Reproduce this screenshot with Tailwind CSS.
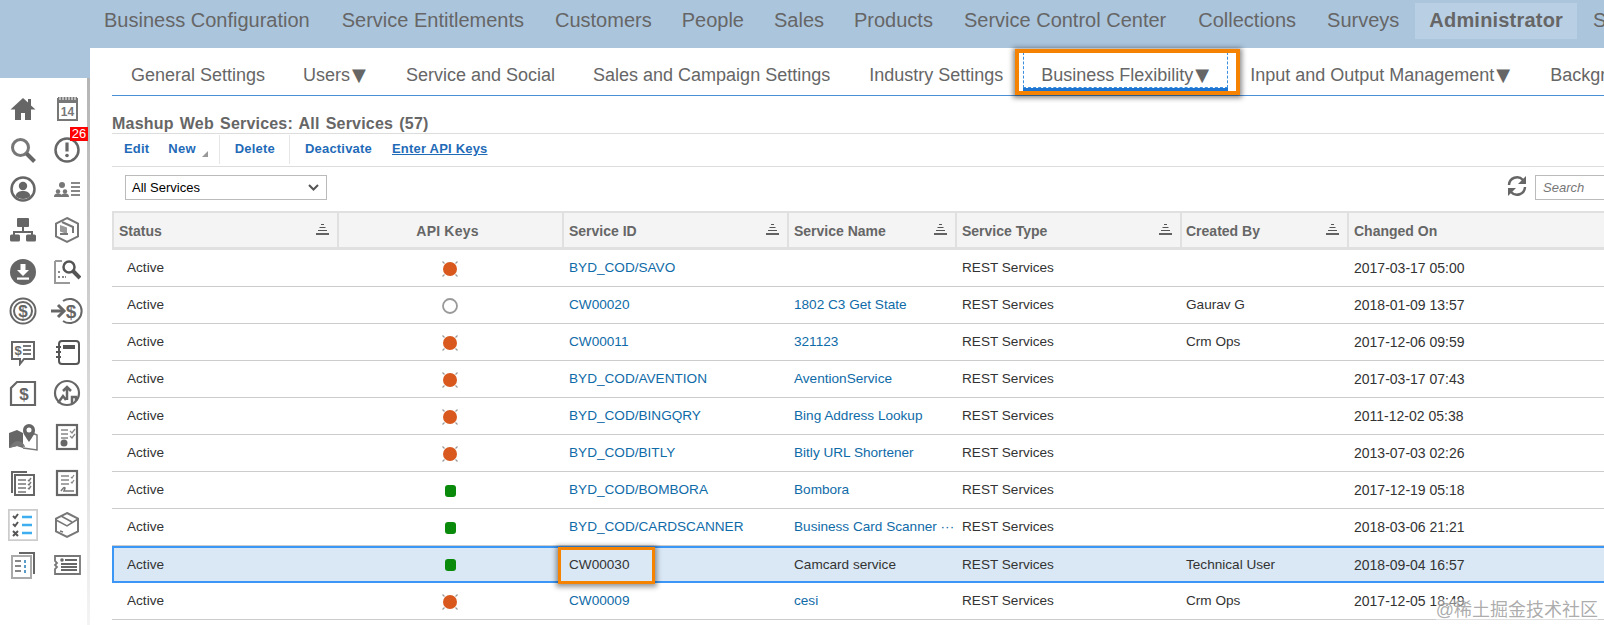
<!DOCTYPE html>
<html lang="en">
<head>
    <meta charset="UTF-8">
    <script src="https://cdn.jsdelivr.net/npm/@tailwindcss/browser@4"></script>
    <title>Mashup Web Services</title>
</head>
<body class="bg-[#abc5dd] font-['Liberation_Sans',Arial,sans-serif] overflow-hidden">
<div class="relative w-[1604px] h-[625px] overflow-hidden">
    <!-- top nav -->
    <nav class="h-[48px] flex pl-[104px] gap-[30px] text-[20px] text-[#666] whitespace-nowrap pt-[5px]">
        <span>Business Configuration</span>
        <span class="ml-[2px]">Service Entitlements</span>
        <span class="ml-[1px]">Customers</span>
        <span>People</span>
        <span>Sales</span>
        <span>Products</span>
        <span class="ml-[1px]">Service Control Center</span>
        <span class="ml-[2px]">Collections</span>
        <span class="ml-[1px]">Surveys</span>
        <span class="relative font-bold tracking-[0.2px]"><span class="absolute -left-[14px] -right-[14px] -top-[2px] h-[36px] bg-[#b9cfe4]"></span><span class="relative">Administrator</span></span>
        <span>Services</span>
    </nav>

    <div class="flex h-[577px]">
        <!-- sidebar -->
        <aside class="relative w-[90px] mt-[30px] h-[547px] bg-white shrink-0 pt-[10px]">
            <span class="absolute right-0 top-0 w-[3px] h-full bg-linear-to-b from-[#b5b5b5] to-[#f4f4f4]"></span>
            <div class="relative w-[88px] grid grid-cols-[45px_43px] grid-rows-[41px_41px_38px_44px_39px_40px_41px_41px_48px_44px_40px_40px] justify-items-center items-center">
                <svg width="28" height="28" viewBox="0 0 28 28" fill="#666"><path d="M14 3 1.500 14.500H6V25h6v-7h4v7h6V14.500h4.500L22 10.500V4h-3v3.500z"/></svg>
                <svg width="28" height="28" viewBox="0 0 28 28"><rect x="5" y="4" width="19" height="21" fill="#fff" stroke="#777" stroke-width="2"/><rect x="5" y="2" width="19" height="6" fill="#777"/><path d="M7 2v3M10 2v3M13 2v3M16 2v3M19 2v3M22 2v3" stroke="#fff" stroke-width="1"/><text x="14.500" y="21" text-anchor="middle" font-size="12" font-weight="700" fill="#777">14</text></svg>
                <svg width="28" height="28" viewBox="0 0 28 28" fill="none"><circle cx="11.500" cy="11.500" r="8" stroke="#777" stroke-width="3"/><path d="m17.500 17.500 8 8" stroke="#666" stroke-width="4"/></svg>
                <svg width="28" height="28" viewBox="0 0 28 28" fill="none"><circle cx="14" cy="14" r="11.500" stroke="#666" stroke-width="2.500"/><path d="M14 6.500v9" stroke="#666" stroke-width="3.200"/><circle cx="14" cy="19.500" r="1.800" fill="#666"/></svg>
                <svg width="28" height="28" viewBox="0 0 28 28" fill="none"><circle cx="14" cy="14" r="11.500" stroke="#666" stroke-width="2.500"/><circle cx="14" cy="11" r="4.200" fill="#666"/><path d="M6.500 21c1-4 4-5 7.500-5s6.500 1 7.500 5c-2 2-4.500 3-7.500 3s-5.500-1-7.500-3z" fill="#666"/></svg>
                <svg width="28" height="28" viewBox="0 0 28 28" fill="#777"><circle cx="9" cy="10" r="3"/><circle cx="5" cy="16.500" r="2.200"/><circle cx="12" cy="16.500" r="2.200"/><path d="M1 22c0-3 2-3.500 4-3.500s4 .5 4 3.500zM8 22c0-3 2-3.500 4-3.500s4 .5 4 3.500z"/><path d="M18 8h9M18 12h9M18 16h9M18 20h9" stroke="#888" stroke-width="2"/></svg>
                <svg width="28" height="28" viewBox="0 0 28 28" fill="#666"><rect x="8" y="2" width="12" height="9" rx="1"/><path d="M14 11v5M5 19v-3h18v3" stroke="#666" stroke-width="2" fill="none"/><rect x="1" y="18.500" width="10" height="7" rx="1.500"/><rect x="17" y="18.500" width="10" height="7" rx="1.500"/></svg>
                <svg width="28" height="28" viewBox="0 0 28 28" fill="none"><path d="M14 2 25 7.500v13L14 26 3 20.500v-13z" stroke="#777" stroke-width="2"/><path d="M7 9l7 2.500V18l-7-2.500z" fill="#999"/><path d="M7 18h8M9 6l11 5v6" stroke="#777" stroke-width="2"/></svg>
                <svg width="28" height="28" viewBox="0 0 28 28"><circle cx="14" cy="14" r="13" fill="#666"/><path d="M11.500 6h5v6h3.500l-6 6-6-6h3.500z" fill="#fff"/><rect x="8" y="19.500" width="12" height="2.200" fill="#fff"/></svg>
                <svg width="28" height="28" viewBox="0 0 28 28" fill="none"><path d="M2 3h7M2 3v22h15M22 15v-2" stroke="#999" stroke-width="2"/><path d="M5 14h2M5 19h2M9 19h4" stroke="#888" stroke-width="2" stroke-dasharray="2 1"/><circle cx="16" cy="9" r="5.500" stroke="#555" stroke-width="2.500"/><path d="m20 13 7 7" stroke="#555" stroke-width="4"/></svg>
                <svg width="28" height="28" viewBox="0 0 28 28" fill="none"><circle cx="14" cy="14" r="12.500" stroke="#666" stroke-width="2"/><circle cx="14" cy="14" r="9" stroke="#666" stroke-width="2"/><text x="14" y="20" text-anchor="middle" font-size="17" font-weight="700" fill="#666" stroke="none">$</text></svg>
                <svg width="34" height="28" viewBox="0 0 34 28" fill="none"><path d="M13 4a12 12 0 1 1 0 20" stroke="#666" stroke-width="2"/><text x="21" y="21" text-anchor="middle" font-size="19" font-weight="700" fill="#666">$</text><path d="M1 14h11" stroke="#666" stroke-width="3"/><path d="m8 8 6 6-6 6" stroke="#666" stroke-width="3"/></svg>
                <svg width="28" height="28" viewBox="0 0 28 28" fill="none"><path d="M3 4h22v17H15l-4 5v-5H3z" stroke="#666" stroke-width="2"/><text x="9" y="17" text-anchor="middle" font-size="13" font-weight="700" fill="#666">$</text><path d="M14 8h8M14 12h8M14 16h8" stroke="#777" stroke-width="2"/></svg>
                <svg width="28" height="28" viewBox="0 0 28 28" fill="none"><rect x="6" y="3" width="20" height="23" rx="3" stroke="#555" stroke-width="2"/><rect x="10" y="7" width="12" height="4" fill="#555"/><path d="M3 9h5M3 14h5M3 19h5" stroke="#555" stroke-width="2"/></svg>
                <svg width="28" height="28" viewBox="0 0 28 28" fill="none"><path d="M8 3h18v23H2V9z" stroke="#666" stroke-width="2.200"/><text x="15" y="21" text-anchor="middle" font-size="17" font-weight="700" fill="#666">$</text></svg>
                <svg width="28" height="28" viewBox="0 0 28 28" fill="none"><circle cx="14" cy="14" r="12" stroke="#666" stroke-width="2.200"/><path d="M5 24l5-7 3 4M14 21V9M10 12l4-4 4 4M19 25v-7h4v4" stroke="#666" stroke-width="2.500"/></svg>
                <svg width="30" height="30" viewBox="0 0 30 30" fill="none"><path d="M1 11l8-3 6 3v15l-6-2-8 2z" fill="#666"/><path d="M15 26l14 2V13l-5-2" fill="#fff" stroke="#777" stroke-width="1.500"/><path d="M4 22c5-6 12-2 13 3l-8-1-8 2z" fill="#777"/><path d="M21 20c-4-6-6-8-6-12a6 6 0 0 1 12 0c0 4-2 6-6 12z" fill="#666"/><circle cx="21" cy="8" r="2.500" fill="#fff"/></svg>
                <svg width="28" height="28" viewBox="0 0 28 28" fill="none"><rect x="4" y="2" width="20" height="24" stroke="#666" stroke-width="2.200"/><path d="M8 7h7M8 11h7M8 15h7M17 8l2 2 3-4M17 13l2 2 3-4" stroke="#888" stroke-width="1.300"/><circle cx="11" cy="20" r="3.500" fill="#666"/></svg>
                <svg width="28" height="28" viewBox="0 0 28 28" fill="none"><path d="M3 24V3h15" stroke="#666" stroke-width="2"/><rect x="6" y="6" width="19" height="20" fill="#fff" stroke="#666" stroke-width="2"/><path d="M9 11h8M9 15h8M9 19h8M9 23h8M19 11l1 1 2-3M19 15l1 1 2-3M19 19l1 1 2-3" stroke="#777" stroke-width="1.400"/></svg>
                <svg width="28" height="28" viewBox="0 0 28 28" fill="none"><rect x="4" y="2" width="20" height="24" stroke="#666" stroke-width="2.200"/><path d="M8 7h8M8 11h8M8 15h8M18 8l1 1 2-3M18 13l1 1 2-3" stroke="#888" stroke-width="1.300"/><path d="M8 22c2-3 3-4 4-3l-1 3h10" stroke="#777" stroke-width="1.600"/></svg>
                <svg width="30" height="32" viewBox="0 0 30 32" fill="none"><rect x="0.500" y="0.500" width="29" height="31" fill="#fff" stroke="#ccc" stroke-width="2.500"/><path d="M5 7l2 2 3-4M5 15l2 2 3-4" stroke="#555" stroke-width="2"/><path d="M5 22l5 5M10 22l-5 5" stroke="#555" stroke-width="2"/><path d="M14 8h10M14 16h10M14 24h10" stroke="#3daef0" stroke-width="2.500"/></svg>
                <svg width="28" height="28" viewBox="0 0 28 28" fill="none"><path d="M14 2 25 7.500v13L14 26 3 20.500v-13z" stroke="#777" stroke-width="2"/><path d="M3 9l11 6 11-7M8 5l11 6M7 20l3 1" stroke="#777" stroke-width="1.500"/></svg>
                <svg width="28" height="28" viewBox="0 0 28 28" fill="none"><path d="M10 2h15v21" stroke="#666" stroke-width="2"/><rect x="3" y="5" width="19" height="22" fill="#fff" stroke="#aaa" stroke-width="2"/><path d="M6 10h6M6 15h6M6 20h6" stroke="#888" stroke-width="2"/><path d="M16 9v3M16 14v3M16 19v3" stroke="#5a9bc8" stroke-width="2"/></svg>
                <svg width="28" height="28" viewBox="0 0 28 28" fill="none"><path d="M2 5h25v18H2v-5l2-2-2-2 2-2-2-2z" stroke="#777" stroke-width="1.800"/><circle cx="9" cy="9" r="1.800" fill="#666"/><path d="M12 9h12M8 13h16M8 16h16M8 19h16" stroke="#666" stroke-width="1.800"/></svg>
                <span class="absolute left-[70px] top-[39px] w-[18px] h-[14px] bg-[#f00] text-white text-[13px] leading-[14px] text-center">26</span>
            </div>
        </aside>

        <!-- main -->
        <main class="flex-1 min-w-0 bg-white pl-[22px]">
            <div class="h-[48px] border-b border-[#4a90d9] pl-[19px] pt-[14px] flex gap-[38px] items-start text-[18px] leading-[27px] text-[#666] whitespace-nowrap [&_b]:font-normal [&_b]:font-['DejaVu_Sans'] [&_b]:leading-none [&_b]:px-[2px]">
                <span>General Settings</span>
                <span>Users<b>▼</b></span>
                <span>Service and Social</span>
                <span>Sales and Campaign Settings</span>
                <span class="ml-[1px]">Industry Settings</span>
                <span class="relative">
                    Business Flexibility<b>▼</b>
                    <span class="absolute -left-[18px] -right-[17px] -top-[10px] h-[36px] border border-dashed border-[#3a8ee0]"></span>
                    <span class="absolute -left-[18px] -right-[17px] top-[26px] h-[3px] bg-[#1d74d0]"></span>
                    <span class="absolute -left-[26px] -right-[29px] -top-[13px] h-[46px] border-[4px] border-[#f58200] shadow-[0_1px_5px_2px_rgba(0,0,0,0.45)]"></span>
                </span>
                <span class="ml-[1px]">Input and Output Management<b>▼</b></span>
                <span>Background</span>
            </div>

            <h1 class="h-[38px] border-b border-[#ddd] pt-[18px] text-[16px] leading-[20px] font-bold text-[#666] tracking-[0.2px] [word-spacing:1.500px]">Mashup Web Services: All Services (57)</h1>

            <div class="h-[33px] border-b border-[#ddd] flex items-center pb-[2px] text-[13px] tracking-[0.2px] font-bold text-[#1f6bb8] whitespace-nowrap">
                <span class="ml-[12px]">Edit</span>
                <span class="ml-[19px]">New</span>
                <span class="ml-[6px] mt-[10px] border-l-[6px] border-b-[6px] border-l-transparent border-b-[#999]"></span>
                <span class="ml-[11px] h-[29px] w-[1px] bg-[#e6e6e6]"></span>
                <span class="ml-[15px]">Delete</span>
                <span class="ml-[14px] h-[29px] w-[1px] bg-[#e6e6e6]"></span>
                <span class="ml-[15px]">Deactivate</span>
                <span class="ml-[20px] underline">Enter API Keys</span>
            </div>

            <div class="h-[44px] flex items-start pt-[8px] pr-0 relative">
                <div class="ml-[13px] w-[202px] h-[25px] border border-[#bbb] flex items-center justify-between pl-[6px] pr-[7px] text-[13px] text-black">
                    All Services
                    <svg width="11" height="7" viewBox="0 0 11 7" fill="none"><path d="m1 1 4.500 4.500L10 1" stroke="#555" stroke-width="2"/></svg>
                </div>
                <svg class="ml-auto mr-[7px] mt-[-1px]" width="22" height="24" viewBox="0 0 22 24" fill="none"><path d="M3 11a8 8 0 0 1 14-5l2 2" stroke="#666" stroke-width="2.500"/><path d="M20 2v8h-8z" fill="#666"/><path d="M19 13a8 8 0 0 1-14 5l-2-2" stroke="#666" stroke-width="2.500"/><path d="M2 22v-8h8z" fill="#666"/></svg>
                <div class="w-[69px] h-[25px] border border-[#bbb] border-r-0 pl-[7px] text-[13px] leading-[23px] italic text-[#777]">Search</div>
            </div>

            <table class="table-fixed w-[1492px] border-separate border-spacing-0 text-[13.6px] text-[#333] whitespace-nowrap">
                <colgroup>
                    <col class="w-[227px]"><col class="w-[225px]"><col class="w-[225px]"><col class="w-[168px]"><col class="w-[225px]"><col class="w-[167px]"><col>
                </colgroup>
                <thead>
                    <tr class="h-[39px] bg-[#f4f4f4] text-[14px] font-bold text-[#666] text-left [&>th]:pt-[2px]">
                        <th class="relative border-y-2 border-b-[3px] border-l-2 border-r-2 border-[#e0e0e0] pl-[5px]">Status<svg class="absolute right-[8px] top-[11px]" width="13" height="11" viewBox="0 0 13 11"><path d="M5 .500h3M3.500 3.500h6M2 6.500h9" stroke="#555"/><path d="M0 10h13" stroke="#000" stroke-width="1.200"/></svg></th>
                        <th class="border-y-2 border-b-[3px] border-r-2 border-[#e0e0e0] text-center pr-[6px] tracking-[0.2px]">API Keys</th>
                        <th class="relative border-y-2 border-b-[3px] border-r-2 border-[#e0e0e0] pl-[5px]">Service ID<svg class="absolute right-[8px] top-[11px]" width="13" height="11" viewBox="0 0 13 11"><path d="M5 .500h3M3.500 3.500h6M2 6.500h9" stroke="#555"/><path d="M0 10h13" stroke="#000" stroke-width="1.200"/></svg></th>
                        <th class="relative border-y-2 border-b-[3px] border-r-2 border-[#e0e0e0] pl-[5px]">Service Name<svg class="absolute right-[8px] top-[11px]" width="13" height="11" viewBox="0 0 13 11"><path d="M5 .500h3M3.500 3.500h6M2 6.500h9" stroke="#555"/><path d="M0 10h13" stroke="#000" stroke-width="1.200"/></svg></th>
                        <th class="relative border-y-2 border-b-[3px] border-r-2 border-[#e0e0e0] pl-[5px]">Service Type<svg class="absolute right-[8px] top-[11px]" width="13" height="11" viewBox="0 0 13 11"><path d="M5 .500h3M3.500 3.500h6M2 6.500h9" stroke="#555"/><path d="M0 10h13" stroke="#000" stroke-width="1.200"/></svg></th>
                        <th class="relative border-y-2 border-b-[3px] border-r-2 border-[#e0e0e0] pl-[4px]">Created By<svg class="absolute right-[8px] top-[11px]" width="13" height="11" viewBox="0 0 13 11"><path d="M5 .500h3M3.500 3.500h6M2 6.500h9" stroke="#555"/><path d="M0 10h13" stroke="#000" stroke-width="1.200"/></svg></th>
                        <th class="border-y-2 border-b-[3px] border-[#e0e0e0] pl-[5px]">Changed On</th>
                    </tr>
                </thead>
                <tbody class="[&_td]:h-[37px] [&_td]:pt-px [&_td]:border-b [&_td]:border-[#ccc] [&_td:last-child]:text-[14px] [&_a]:text-[#0f6ba8]">
                    <tr>
                        <td class="pl-[15px]">Active</td>
                        <td class="text-center pr-[3px]"><svg class="inline-block align-middle" width="18" height="18" viewBox="0 0 18 18"><path d="m1.500 1.500 2 2M16.500 1.500l-2 2M1.500 16.500l2-2M16.500 16.500l-2-2" stroke="#999" stroke-width="1.200"/><circle cx="9" cy="9" r="7" fill="#d9581e"/></svg></td>
                        <td class="pl-[5px]"><a>BYD_COD/SAVO</a></td>
                        <td class="pl-[5px]"></td>
                        <td class="pl-[5px]">REST Services</td>
                        <td class="pl-[4px]"></td>
                        <td class="pl-[5px]">2017-03-17 05:00</td>
                    </tr>
                    <tr>
                        <td class="pl-[15px]">Active</td>
                        <td class="text-center pr-[3px]"><svg class="inline-block align-middle" width="18" height="18" viewBox="0 0 18 18"><circle cx="9" cy="9" r="7" fill="none" stroke="#999" stroke-width="1.800"/></svg></td>
                        <td class="pl-[5px]"><a>CW00020</a></td>
                        <td class="pl-[5px]"><a>1802 C3 Get State</a></td>
                        <td class="pl-[5px]">REST Services</td>
                        <td class="pl-[4px]">Gaurav G</td>
                        <td class="pl-[5px]">2018-01-09 13:57</td>
                    </tr>
                    <tr>
                        <td class="pl-[15px]">Active</td>
                        <td class="text-center pr-[3px]"><svg class="inline-block align-middle" width="18" height="18" viewBox="0 0 18 18"><path d="m1.500 1.500 2 2M16.500 1.500l-2 2M1.500 16.500l2-2M16.500 16.500l-2-2" stroke="#999" stroke-width="1.200"/><circle cx="9" cy="9" r="7" fill="#d9581e"/></svg></td>
                        <td class="pl-[5px]"><a>CW00011</a></td>
                        <td class="pl-[5px]"><a>321123</a></td>
                        <td class="pl-[5px]">REST Services</td>
                        <td class="pl-[4px]">Crm Ops</td>
                        <td class="pl-[5px]">2017-12-06 09:59</td>
                    </tr>
                    <tr>
                        <td class="pl-[15px]">Active</td>
                        <td class="text-center pr-[3px]"><svg class="inline-block align-middle" width="18" height="18" viewBox="0 0 18 18"><path d="m1.500 1.500 2 2M16.500 1.500l-2 2M1.500 16.500l2-2M16.500 16.500l-2-2" stroke="#999" stroke-width="1.200"/><circle cx="9" cy="9" r="7" fill="#d9581e"/></svg></td>
                        <td class="pl-[5px]"><a>BYD_COD/AVENTION</a></td>
                        <td class="pl-[5px]"><a>AventionService</a></td>
                        <td class="pl-[5px]">REST Services</td>
                        <td class="pl-[4px]"></td>
                        <td class="pl-[5px]">2017-03-17 07:43</td>
                    </tr>
                    <tr>
                        <td class="pl-[15px]">Active</td>
                        <td class="text-center pr-[3px]"><svg class="inline-block align-middle" width="18" height="18" viewBox="0 0 18 18"><path d="m1.500 1.500 2 2M16.500 1.500l-2 2M1.500 16.500l2-2M16.500 16.500l-2-2" stroke="#999" stroke-width="1.200"/><circle cx="9" cy="9" r="7" fill="#d9581e"/></svg></td>
                        <td class="pl-[5px]"><a>BYD_COD/BINGQRY</a></td>
                        <td class="pl-[5px]"><a>Bing Address Lookup</a></td>
                        <td class="pl-[5px]">REST Services</td>
                        <td class="pl-[4px]"></td>
                        <td class="pl-[5px]">2011-12-02 05:38</td>
                    </tr>
                    <tr>
                        <td class="pl-[15px]">Active</td>
                        <td class="text-center pr-[3px]"><svg class="inline-block align-middle" width="18" height="18" viewBox="0 0 18 18"><path d="m1.500 1.500 2 2M16.500 1.500l-2 2M1.500 16.500l2-2M16.500 16.500l-2-2" stroke="#999" stroke-width="1.200"/><circle cx="9" cy="9" r="7" fill="#d9581e"/></svg></td>
                        <td class="pl-[5px]"><a>BYD_COD/BITLY</a></td>
                        <td class="pl-[5px]"><a>Bitly URL Shortener</a></td>
                        <td class="pl-[5px]">REST Services</td>
                        <td class="pl-[4px]"></td>
                        <td class="pl-[5px]">2013-07-03 02:26</td>
                    </tr>
                    <tr>
                        <td class="pl-[15px]">Active</td>
                        <td class="text-center pr-[3px]"><span class="inline-block align-middle w-[11px] h-[12px] rounded-[3px] bg-[#0a8a0a]"></span></td>
                        <td class="pl-[5px]"><a>BYD_COD/BOMBORA</a></td>
                        <td class="pl-[5px]"><a>Bombora</a></td>
                        <td class="pl-[5px]">REST Services</td>
                        <td class="pl-[4px]"></td>
                        <td class="pl-[5px]">2017-12-19 05:18</td>
                    </tr>
                    <tr>
                        <td class="pl-[15px]">Active</td>
                        <td class="text-center pr-[3px]"><span class="inline-block align-middle w-[11px] h-[12px] rounded-[3px] bg-[#0a8a0a]"></span></td>
                        <td class="pl-[5px]"><a>BYD_COD/CARDSCANNER</a></td>
                        <td class="pl-[5px]"><a>Business Card Scanner ···</a></td>
                        <td class="pl-[5px]">REST Services</td>
                        <td class="pl-[4px]"></td>
                        <td class="pl-[5px]">2018-03-06 21:21</td>
                    </tr>
                    <tr class="bg-[#dae8f5] [&>td]:border-y-2 [&>td]:border-[#3c96f5]">
                        <td class="pl-[13px] border-l-2">Active</td>
                        <td class="text-center pr-[3px]"><span class="inline-block align-middle w-[11px] h-[12px] rounded-[3px] bg-[#0a8a0a]"></span></td>
                        <td class="relative pl-[5px]">CW00030<span class="absolute left-[-6px] top-[-1px] w-[97px] h-[37px] border-[3px] border-[#f58200] shadow-[0_1px_5px_2px_rgba(0,0,0,0.4)]"></span></td>
                        <td class="pl-[5px]">Camcard service</td>
                        <td class="pl-[5px]">REST Services</td>
                        <td class="pl-[4px]">Technical User</td>
                        <td class="pl-[5px]">2018-09-04 16:57</td>
                    </tr>
                    <tr>
                        <td class="pl-[15px]">Active</td>
                        <td class="text-center pr-[3px]"><svg class="inline-block align-middle" width="18" height="18" viewBox="0 0 18 18"><path d="m1.500 1.500 2 2M16.500 1.500l-2 2M1.500 16.500l2-2M16.500 16.500l-2-2" stroke="#999" stroke-width="1.200"/><circle cx="9" cy="9" r="7" fill="#d9581e"/></svg></td>
                        <td class="pl-[5px]"><a>CW00009</a></td>
                        <td class="pl-[5px]"><a>cesi</a></td>
                        <td class="pl-[5px]">REST Services</td>
                        <td class="pl-[4px]">Crm Ops</td>
                        <td class="pl-[5px]">2017-12-05 18:49</td>
                    </tr>
                </tbody>
            </table>
        </main>
    </div>

    <span class="absolute right-[6px] bottom-[4px] text-[18px] leading-[22px] text-[#888]/70 bg-white/40 font-['Liberation_Sans','Noto_Sans_CJK_SC',sans-serif]">@稀土掘金技术社区</span>
</div>
</body>
</html>
